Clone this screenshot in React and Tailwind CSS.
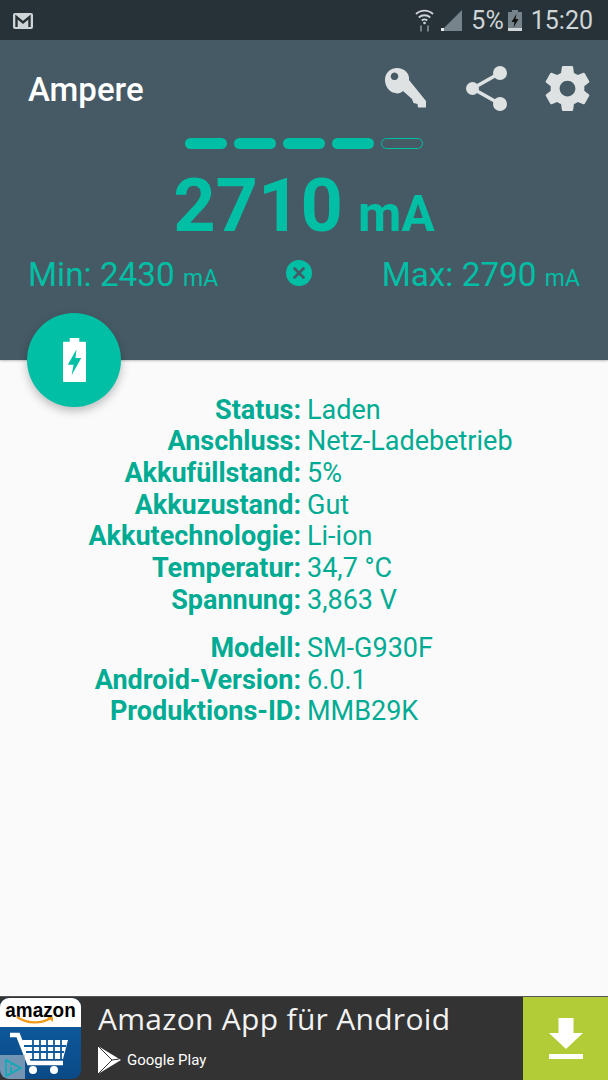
import { X } from 'lucide-react';

const rows1 = [
    ['Status:', 'Laden'],
    ['Anschluss:', 'Netz-Ladebetrieb'],
    ['Akkufüllstand:', '5%'],
    ['Akkuzustand:', 'Gut'],
    ['Akkutechnologie:', 'Li-ion'],
    ['Temperatur:', '34,7 °C'],
    ['Spannung:', '3,863 V'],
];

const rows2 = [
    ['Modell:', 'SM-G930F'],
    ['Android-Version:', '6.0.1'],
    ['Produktions-ID:', 'MMB29K'],
];

function InfoRows({ rows }) {
    return (
        <div className="grid grid-cols-[301px_1fr] gap-x-[6px] text-[27px] leading-[31.7px] text-[#00ab93]">
            {rows.map(([label, value]) => (
                <div key={label} className="contents">
                    <span className="text-right font-bold whitespace-nowrap">{label}</span>
                    <span>{value}</span>
                </div>
            ))}
        </div>
    );
}

function StatusBar() {
    return (
        <div className="h-10 bg-[#263238] flex items-center pl-[13px] pr-[15px] pt-[1px] text-[#cfd4d6]">
            <svg width="20" height="16" viewBox="0 0 20 16">
                <rect x="0" y="0" width="20" height="16" rx="2" fill="#cfd4d6" />
                <path d="M3.500 14V4l6.500 5.500L16.500 4v10" fill="none" stroke="#263238" strokeWidth="2.400" />
            </svg>
            <div className="ml-auto flex items-center">
                <svg width="19" height="23" viewBox="0 0 19 23" fill="none" stroke="#cfd4d6" strokeWidth="1.800">
                    <path d="M1 5c4.800-4.600 12.200-4.600 17 0" />
                    <path d="M3.800 8.500c3.200-3 8.200-3 11.400 0" />
                    <path d="M6.800 11.500c1.600-1.400 3.800-1.400 5.400 0" />
                    <circle cx="9.500" cy="14" r="1.300" fill="#cfd4d6" stroke="none" />
                    <path d="M6 16.500v6M13 16.500v6" stroke="#7d878c" />
                </svg>
                <svg className="ml-[7px]" width="21" height="21" viewBox="0 0 21 21">
                    <path d="M21 0v21H0z" fill="#77838a" />
                    <path d="M0 21v-3h3v3z" fill="#e8eaeb" />
                </svg>
                <span className="ml-[9px] text-[25px] font-['Roboto',sans-serif]">5%</span>
                <svg className="ml-[4px]" width="14" height="21" viewBox="0 0 14 21">
                    <path d="M4 0h6v2h4v19H0V2h4z" fill="#77838a" />
                    <path d="M0 18h14v3H0z" fill="#cfd4d6" />
                    <path d="M8.500 4 3.500 12h3L5.500 17.500l5-8.500h-3z" fill="#111" />
                </svg>
                <span className="ml-[9px] text-[25px] font-['Roboto',sans-serif]">15:20</span>
            </div>
        </div>
    );
}

function KeyIcon() {
    return (
        <svg width="41" height="40" viewBox="0 0 41 40">
            <path
                fillRule="evenodd"
                fill="#dfe2e3"
                d="M12 0C5 0 0 5 0 12c0 6 4 12 10 13 3 1 6 0 8-2l9 8 1.500 4 4 1 .5 3.500h8V33L24 12C25 5 19 0 12 0zM9.500 4.500a3.800 3.800 0 1 0 .01 0z"
            />
        </svg>
    );
}

function ShareIcon() {
    return (
        <svg width="41" height="45" viewBox="0 0 41 45" fill="#dfe2e3">
            <circle cx="34" cy="7" r="7" />
            <circle cx="6.500" cy="22.500" r="6.500" />
            <circle cx="34" cy="38" r="7" />
            <path d="M34 7 6.500 22.500 34 38" fill="none" stroke="#dfe2e3" strokeWidth="3.500" />
        </svg>
    );
}

function GearIcon() {
    return (
        <svg width="45" height="45" viewBox="2 2 20 20">
            <path
                fill="#dfe2e3"
                d="M19.430 12.980c.04-.32.07-.64.07-.98s-.03-.66-.07-.98l2.110-1.650c.19-.15.24-.42.12-.64l-2-3.460c-.12-.22-.39-.3-.61-.22l-2.490 1c-.52-.4-1.080-.73-1.690-.98l-.38-2.650C14.460 2.180 14.250 2 14 2h-4c-.25 0-.46.18-.49.420l-.38 2.650c-.61.25-1.170.59-1.690.98l-2.490-1c-.23-.09-.49 0-.61.22l-2 3.460c-.13.22-.07.49.12.64l2.110 1.650c-.04.32-.07.650-.07.980s.03.660.07.980l-2.110 1.650c-.19.150-.24.420-.12.640l2 3.460c.12.220.39.300.61.220l2.490-1c.52.400 1.080.730 1.690.980l.38 2.650c.03.240.24.420.49.420h4c.25 0 .46-.18.49-.42l.38-2.650c.61-.25 1.170-.59 1.690-.98l2.490 1c.23.09.49 0 .61-.22l2-3.460c.12-.22.07-.49-.12-.64l-2.110-1.650zM12 15.500c-1.930 0-3.500-1.570-3.500-3.500s1.570-3.500 3.500-3.500 3.500 1.570 3.500 3.500-1.570 3.500-3.500 3.500z"
            />
        </svg>
    );
}

function BatteryBars() {
    return (
        <div className="flex justify-center gap-[7px]">
            {[0, 1, 2, 3].map((i) => (
                <div key={i} className="w-[42px] h-[11px] rounded-full bg-[#00bfa5]" />
            ))}
            <div className="w-[42px] h-[11px] rounded-full border border-[#00bfa5]" />
        </div>
    );
}

function Header() {
    return (
        <div className="relative h-80 bg-[#465a65] text-[#00bfa5] shadow-[0_1px_2px_rgba(0,0,0,0.25)]">
            <div className="flex items-center h-[96px] mb-[2px] pl-[28px] pr-[18px]">
                <h1 className="text-[33px] font-medium text-white pt-[3px]">Ampere</h1>
                <div className="ml-auto flex items-center">
                    <KeyIcon />
                    <div className="ml-[40px]"><ShareIcon /></div>
                    <div className="ml-[38px]"><GearIcon /></div>
                </div>
            </div>
            <BatteryBars />
            <div className="flex justify-center items-baseline mt-[17px] h-[80px] leading-[80px] font-bold">
                <span className="text-[74px]">2710</span>
                <span className="text-[50px] ml-[15px]">mA</span>
            </div>
            <div className="flex items-center justify-between pl-[28px] pr-[28px] mt-[9px]">
                <span className="text-[33.3px] leading-10">Min: 2430 <span className="text-[23px]">mA</span></span>
                <span className="w-[26px] h-[26px] rounded-full bg-[#00bfa5] flex items-center justify-center -translate-x-px -translate-y-[4px]">
                    <X size={18} strokeWidth={3.5} color="#465a65" />
                </span>
                <span className="text-[33.3px] leading-10">Max: 2790 <span className="text-[23px]">mA</span></span>
            </div>
            <div className="absolute left-[27px] top-[273px] w-[94px] h-[94px] rounded-full bg-[#00bfa5] flex items-center justify-center shadow-[0_4px_10px_rgba(0,0,0,0.25)]">
                <svg width="23" height="46" viewBox="0 0 24 46">
                    <path
                        fillRule="evenodd"
                        fill="#fff"
                        d="M7 0h10v4h6a1 1 0 0 1 1 1v40a1 1 0 0 1-1 1H1a1 1 0 0 1-1-1V5a1 1 0 0 1 1-1h6zM14 12 5 28h6l-2 11 10-18h-6z"
                    />
                </svg>
            </div>
        </div>
    );
}

function AmazonIcon() {
    return (
        <div className="relative w-[81px] h-[81px] mt-[1px] rounded-[9px] overflow-hidden bg-gradient-to-b from-[#0f5fa6] to-[#0a4a86]">
            <div className="h-[29px] bg-white">
                <span className="block text-center text-[21px] leading-[24px] font-bold text-black font-['Liberation_Sans',sans-serif] scale-x-[0.9]">amazon</span>
                <svg className="absolute left-[16px] top-[18px]" width="38" height="9" viewBox="0 0 38 9">
                    <path d="M1 1c10 7 24 7 34 1" fill="none" stroke="#f09a1a" strokeWidth="2.200" />
                    <path d="M31 1h6v5z" fill="#f09a1a" />
                </svg>
            </div>
            <svg className="absolute left-0 top-0" width="81" height="81" viewBox="0 0 81 81">
                <path d="M10 37h8l11 28h34" fill="none" stroke="#fff" strokeWidth="4.500" />
                <path d="M22 42h46l-5 19H28z" fill="#fff" />
                <path d="M24 48h42M26 54h38M33 42v19M40 42v19M47 42v19M54 42v19M61 42v19" stroke="#0d5a9e" strokeWidth="1.800" />
                <circle cx="33" cy="72" r="4" fill="#fff" />
                <circle cx="54" cy="72" r="4" fill="#fff" />
            </svg>
            <div className="absolute left-0 bottom-[-1px] w-[25px] h-[25px] bg-[#9fb4c4]/70 flex items-center justify-center">
                <svg width="20" height="20" viewBox="0 0 20 20" fill="none" stroke="#1aa7b8" strokeWidth="2">
                    <path d="M3 2v16l15-8z" />
                    <path d="M8 9v5M8 6v1" />
                </svg>
            </div>
        </div>
    );
}

function AdBanner() {
    return (
        <div className="h-[84px] bg-[#333333] border-t border-[#555] flex font-['Open_Sans',sans-serif]">
            <AmazonIcon />
            <div className="ml-[17px] flex-1">
                <div className="text-[30px] leading-[46px] text-[#f2f2f2] -mt-[1px] tracking-[0.3px]">Amazon App für Android</div>
                <div className="flex items-center mt-[4px]">
                    <svg width="23" height="28" viewBox="0 0 23 28">
                        <path d="M0 0 23 14 0 28z" fill="#fff" />
                        <path d="M0 0 14 14 0 28M14 14l7-1" fill="none" stroke="#333" strokeWidth="1" />
                    </svg>
                    <span className="ml-[6px] text-[15px] text-white font-['Roboto',sans-serif]">Google Play</span>
                </div>
            </div>
            <div className="w-[85px] bg-[#b2cc37] flex flex-col items-center justify-center">
                <svg width="34" height="41" viewBox="0 0 34 41" fill="#fff">
                    <path d="M9.500 0h15v15H34L17 31 0 15h9.500zM0 36h34v5.500H0z" />
                </svg>
            </div>
        </div>
    );
}

export default function App() {
    return (
        <div className="w-[608px] h-[1080px] flex flex-col overflow-hidden bg-[#fafafa] font-['Roboto',sans-serif]">
            <StatusBar />
            <Header />
            <div className="flex-1 pt-[34.5px]">
                <InfoRows rows={rows1} />
                <div className="h-[16.5px]" />
                <InfoRows rows={rows2} />
            </div>
            <AdBanner />
        </div>
    );
}
